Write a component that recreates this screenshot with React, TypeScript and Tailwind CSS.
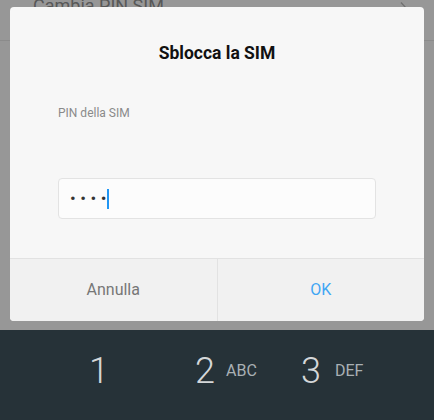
import React from 'react';

const font = { fontFamily: 'Roboto, "Noto Sans", sans-serif' };

function Key({ digit, letters, width, gap }: { digit: string; letters?: string; width: string; gap?: string }) {
  return (
    <div className={`flex items-start ${width}`}>
      <span className="text-[36px] font-light leading-none text-[#d4d7d9]">{digit}</span>
      {letters && <span className={`${gap} mt-[10px] text-[16px] leading-none text-[#a9b0b4]`}>{letters}</span>}
    </div>
  );
}

export default function App() {
  return (
    <div className="flex h-[420px] w-[434px] flex-col overflow-hidden bg-[#979797]" style={font}>
      <div className="relative h-[330px]">
        {/* settings list behind the dim layer */}
        <div className="flex h-[41px] items-start justify-between border-b border-[#8b8b8b] pl-[33px] pr-[26px]">
          <span className="-mt-[4px] text-[18px] leading-[20px] text-[#585858]">Cambia PIN SIM</span>
          <svg width="8" height="14" viewBox="0 0 8 14" className="mt-[2px]">
            <path d="M1 0.5 L7 7 L1 13.5" fill="none" stroke="#707070" strokeWidth="1.2" />
          </svg>
        </div>

        {/* dialog */}
        <div className="absolute left-[10px] top-[7px] flex h-[314px] w-[414px] flex-col overflow-hidden rounded-[4px] bg-[#f7f7f7]">
          <div className="flex flex-1 flex-col px-[48px] pt-[34px]">
            <h1 className="text-center text-[17.5px] font-bold leading-[24px] text-[#111]">Sblocca la SIM</h1>
            <p className="mt-[40px] text-[12px] leading-[16px] text-[#8a8a8a]">PIN della SIM</p>
            <div className="mt-[57px] flex h-[41px] items-center rounded-[4px] border border-[#e3e3e3] bg-[#fcfcfc] pl-[11px]">
              <span className="text-[17px] leading-none tracking-[4.5px] text-[#333]">••••</span>
              <span className="-ml-[4px] h-[20px] w-[2px] bg-[#2196f3]" />
            </div>
          </div>
          <div className="flex h-[63px] border-t border-[#e2e2e2] bg-[#f1f1f1]">
            <button className="flex-1 border-r border-[#e2e2e2] text-[16px] text-[#777]">Annulla</button>
            <button className="flex-1 text-[16px] text-[#3fa6f4]">OK</button>
          </div>
        </div>
      </div>

      {/* dial pad */}
      <div className="flex h-[90px] bg-[#263238] pl-[89px] pt-[23px]">
        <Key digit="1" width="w-[106px]" />
        <Key digit="2" letters="ABC" width="w-[106px]" gap="ml-[11px]" />
        <Key digit="3" letters="DEF" width="w-[106px]" gap="ml-[14px]" />
      </div>
    </div>
  );
}
